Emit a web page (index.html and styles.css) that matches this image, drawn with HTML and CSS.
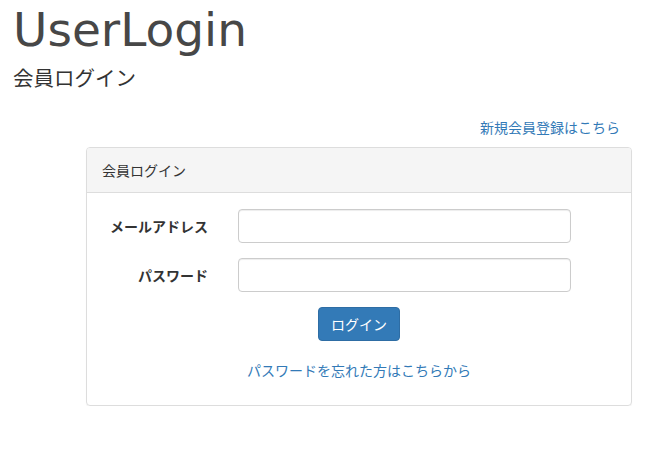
FILE: index.html
```html
<!DOCTYPE html>
<html lang="ja">
<head>
<meta charset="utf-8">
<title>UserLogin</title>
<link rel="stylesheet" href="styles.css">
</head>
<body>
<div class="page">
  <header class="title">
    <h1 class="title-main">UserLogin</h1>
    <p class="title-sub">会員ログイン</p>
  </header>
  <div class="signup"><a href="#" class="link">新規会員登録はこちら</a></div>
  <section class="panel">
    <div class="panel-heading">会員ログイン</div>
    <div class="panel-body">
      <form class="form">
        <div class="form-row">
          <label class="form-label" for="email">メールアドレス</label>
          <input class="form-input" id="email" type="text">
        </div>
        <div class="form-row">
          <label class="form-label" for="pw">パスワード</label>
          <input class="form-input" id="pw" type="password">
        </div>
        <div class="form-actions">
          <button type="button" class="btn">ログイン</button>
        </div>
        <div class="forgot"><a href="#" class="link">パスワードを忘れた方はこちらから</a></div>
      </form>
    </div>
  </section>
</div>
</body>
</html>
```

FILE: styles.css
```css
* { box-sizing: border-box; }
html, body { margin: 0; padding: 0; background: #fff; }
body {
  font-family: "Noto Sans", "Noto Sans CJK JP", sans-serif;
  font-size: 14px;
  color: #333;
}
.page { width: 660px; }
.title { padding-left: 13px; }
.title-main {
  margin: 0;
  padding-top: 1px;
  font-family: "DejaVu Sans", "Noto Sans CJK JP", sans-serif;
  font-weight: 400;
  font-size: 47px;
  line-height: 58px;
  color: #474747;
}
.title-sub {
  margin: 5px 0 0;
  font-family: "Noto Sans CJK JP", sans-serif;
  font-size: 20.5px;
  line-height: 26px;
  color: #333;
}
.signup {
  margin-top: 27px;
  padding-right: 40px;
  text-align: right;
  line-height: 20px;
}
.link {
  color: #337ab7;
  text-decoration: none;
  font-family: "Noto Sans CJK JP", sans-serif;
  font-size: 14px;
}
.panel {
  margin: 9px 0 0 86px;
  width: 546px;
  border: 1px solid #ddd;
  border-radius: 4px;
  box-shadow: 0 1px 1px rgba(0,0,0,.05);
}
.panel-heading {
  height: 45px;
  padding: 0 15px;
  display: flex;
  align-items: center;
  background: #f5f5f5;
  border-bottom: 1px solid #ddd;
  border-radius: 3px 3px 0 0;
  font-family: "Noto Sans CJK JP", sans-serif;
  font-size: 14px;
  color: #333;
}
.panel-body { padding: 16px 15px 24px; }
.form { display: flex; flex-direction: column; gap: 15px; }
.form-row {
  display: grid;
  grid-template-columns: 106px 333px;
  column-gap: 30px;
  align-items: center;
}
.form-label {
  text-align: right;
  font-family: "Noto Sans CJK JP", sans-serif;
  font-weight: 700;
  font-size: 14px;
  color: #333;
}
.form-input {
  height: 34px;
  width: 333px;
  border: 1px solid #ccc;
  border-radius: 4px;
  box-shadow: inset 0 1px 1px rgba(0,0,0,.075);
  padding: 6px 12px;
  font-size: 14px;
  background: #fff;
}
.form-actions { display: flex; justify-content: center; }
.btn {
  height: 34px;
  width: 82px;
  padding: 0;
  background: #337ab7;
  border: 1px solid #2e6da4;
  border-radius: 4px;
  color: #fff;
  font-family: "Noto Sans CJK JP", sans-serif;
  font-size: 14px;
}
.forgot {
  margin-top: 4px;
  text-align: center;
  line-height: 20px;
}
```
